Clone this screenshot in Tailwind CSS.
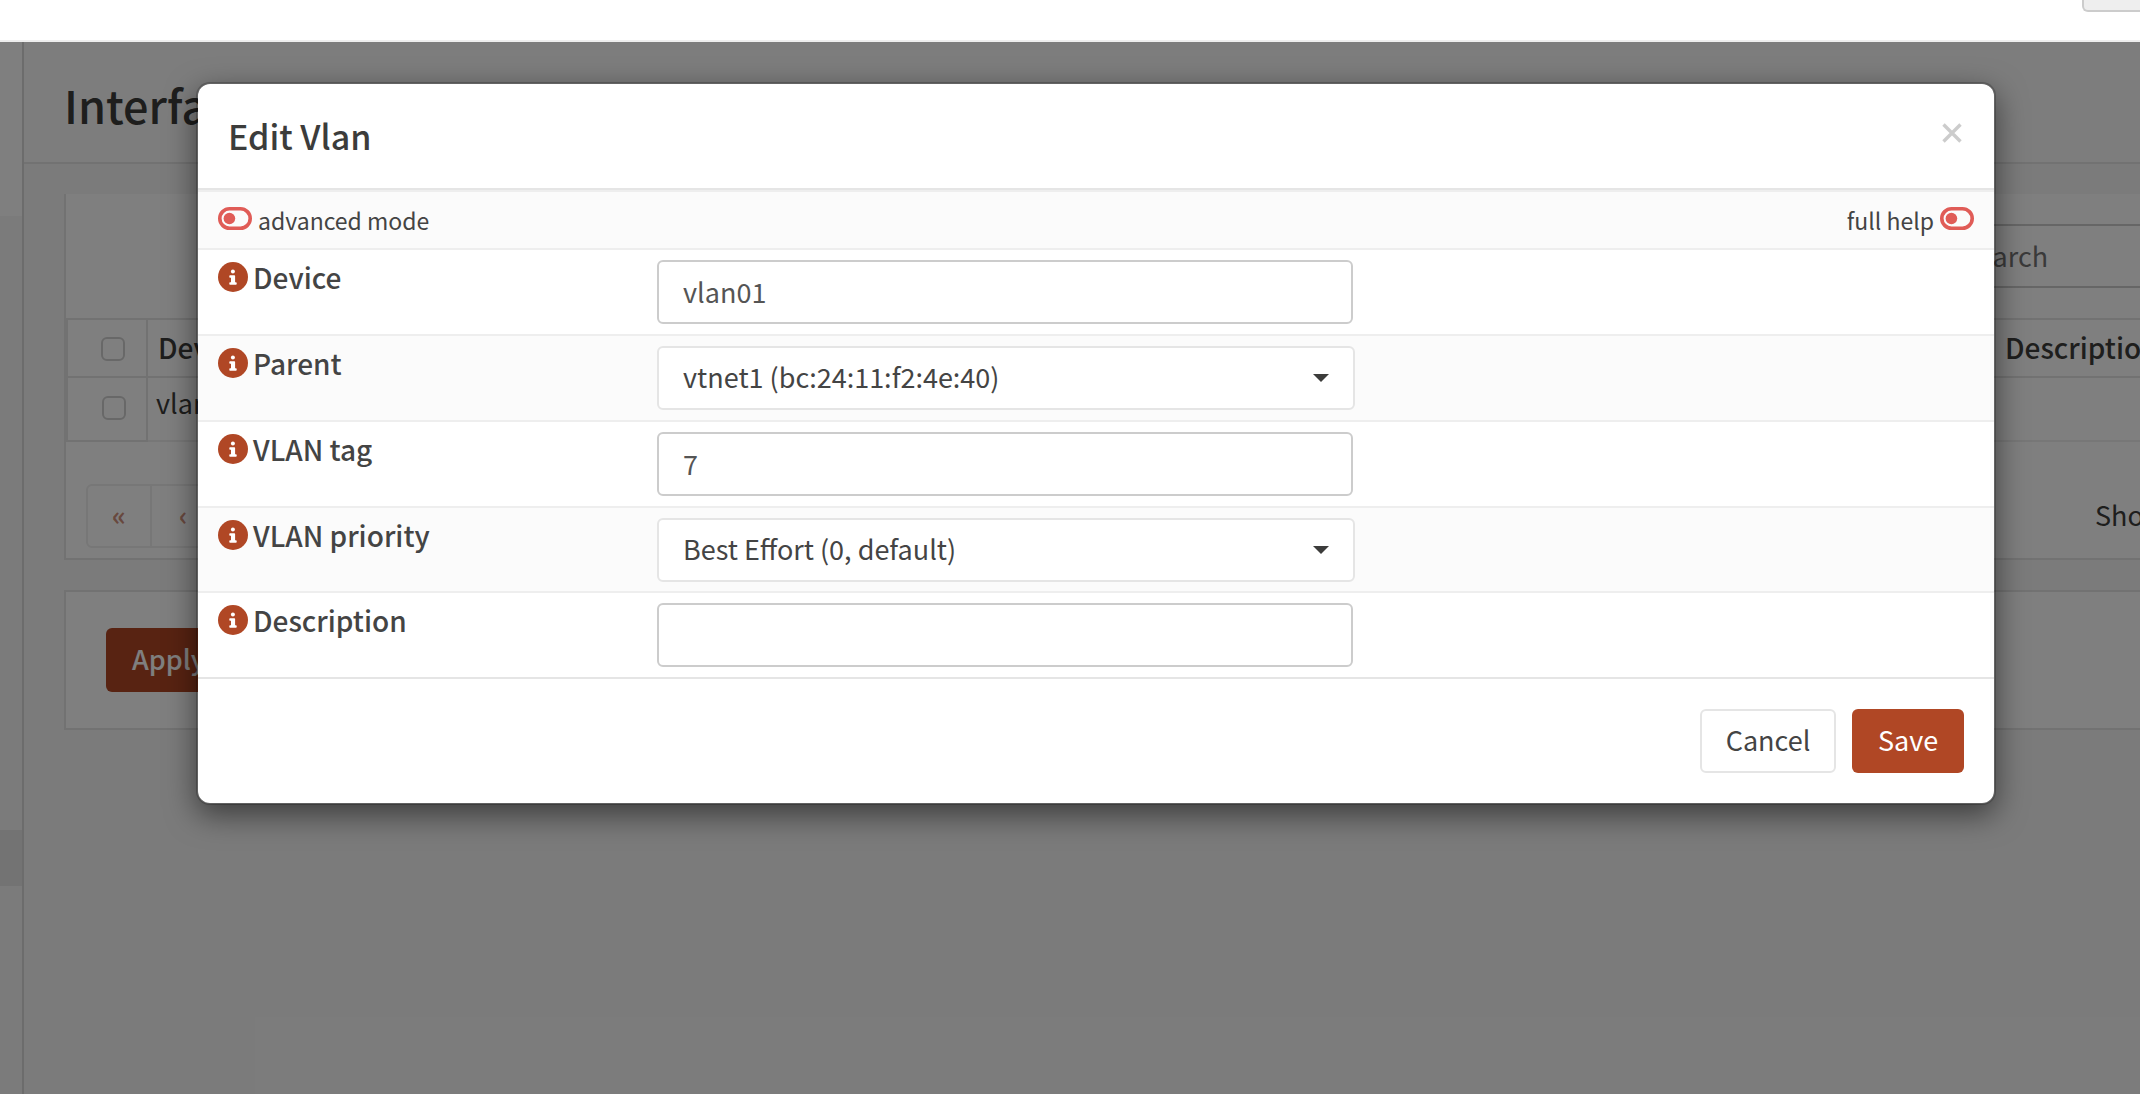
<!DOCTYPE html>
<html lang="en">
<head>
<meta charset="utf-8">
<meta name="viewport" content="width=device-width, initial-scale=1">
<title>Interfaces: Edit Vlan</title>
<script src="https://cdn.jsdelivr.net/npm/@tailwindcss/browser@4"></script>
</head>
<body class="flex min-h-screen flex-col overflow-hidden bg-white font-['Noto_Sans_CJK_SC','Noto_Sans',sans-serif] text-[27px] leading-[36px] text-[#3c3c3b]">
<svg class="hidden" aria-hidden="true">
  <symbol id="info" viewBox="0 0 30 30">
    <circle cx="15" cy="15" r="15" fill="#b04725"/>
    <circle cx="14.9" cy="9.4" r="2" fill="#fff"/>
    <path d="M12.1 13.2h4.2a.8.8 0 0 1 .8.8v6.2h.8a.8.8 0 0 1 .8.8v1a.8.8 0 0 1-.8.8h-5.800a.8.8 0 0 1-.8-.8v-1a.8.8 0 0 1 .8-.8h.9v-4.400h-.9a.8.8 0 0 1-.8-.8v-1a.8.8 0 0 1 .8-.8z" fill="#fff"/>
  </symbol>
  <symbol id="toggle" viewBox="0 0 34 23">
    <rect x="1.800" y="1.800" width="30.400" height="19.400" rx="9.700" fill="none" stroke="#e05c57" stroke-width="3.600"/>
    <circle cx="11.400" cy="11.500" r="5.800" fill="#e05c57"/>
  </symbol>
</svg>

<header class="flex h-[42px] shrink-0 items-start justify-end border-b-2 border-[#eee] bg-white">
  <input type="search" aria-label="Find page" class="h-3 w-[58px] rounded-bl-md border-b-2 border-l-2 border-[#ccc] bg-[#eee]">
</header>

<div class="relative flex grow overflow-hidden">
  <nav aria-label="Sidebar" class="flex w-6 shrink-0 flex-col border-r-2 border-[#d9d9d9] bg-[#f7f7f7]">
    <div class="h-[174px] bg-white"></div>
    <div class="mt-[614px] h-14 bg-[#e6e6e6]"></div>
  </nav>

  <main class="min-w-0 grow bg-[#f7f7f7]">
    <div class="flex h-[122px] items-center border-b-2 border-[#e5e5e5] bg-[#fbfbfb] px-10">
      <h1 class="pt-[6px] text-[45px] leading-[56px] font-medium">Interfaces</h1>
    </div>

    <section class="ml-10 mt-[30px] border-2 border-r-0 border-t-0 border-[#e5e5e5] bg-white">
      <div class="flex justify-end pt-[30px] pb-[30px]">
        <input type="search" placeholder="Search" aria-label="Search" class="h-16 w-[198px] border-y-2 border-[#ccc] bg-white pb-[2px] pl-5 placeholder:text-[#757575]">
      </div>
      <table class="w-full table-fixed border-collapse text-left">
        <thead>
          <tr class="h-[58px] border-y-2 border-[#e5e5e5]">
            <th class="w-20 border-x-2 border-[#e5e5e5] pt-[2px] pl-[33px]"><input type="checkbox" aria-label="Select all" class="block size-6 appearance-none rounded-md border-2 border-[#d0d0d0] bg-white"></th>
            <th class="w-[1858px] pb-[2px] pl-[10px] text-[28px] font-medium">Device</th>
            <th class="pb-[2px] text-[28px] font-medium whitespace-nowrap">Description</th>
          </tr>
        </thead>
        <tbody>
          <tr class="h-16 border-b-2 border-[#eee] align-top">
            <td class="border-x-2 border-b-2 border-[#e5e5e5] pt-[18px] pl-[34px]"><input type="checkbox" aria-label="Select vlan01" class="block size-6 appearance-none rounded-md border-2 border-[#d0d0d0] bg-white"></td>
            <td class="pt-[7px] pl-2">vlan01</td>
            <td></td>
          </tr>
        </tbody>
      </table>
      <div class="flex items-center justify-between overflow-hidden px-5 pt-[42px] pb-[10px]">
        <div class="flex h-16 rounded-md border-2 border-[#eee] text-[#b04725]/60">
          <button class="w-16 border-r-2 border-[#eee] pb-[2px] font-bold">«</button>
          <button class="w-16 border-r-2 border-[#eee] pb-[2px] font-bold">‹</button>
        </div>
        <span class="-mr-[105px] w-[130px] pb-[2px] whitespace-nowrap">Showing 1</span>
      </div>
    </section>

    <section class="ml-10 mt-[30px] border-2 border-r-0 border-[#e5e5e5] bg-white px-10 py-9">
      <button class="block h-16 rounded-md bg-[#b04725] px-[26px] pb-[2px] font-medium text-white">Apply</button>
    </section>
  </main>

  <div class="absolute inset-0 bg-black/50"></div>

  <div role="dialog" aria-labelledby="dialog-title" class="absolute inset-x-0 top-0 mt-10 mr-36 ml-49 rounded-[14px] border-2 border-black/20 bg-white bg-clip-padding shadow-[0_10px_30px_rgba(0,0,0,0.5)]">
    <div class="flex h-[106px] items-start justify-between border-b-2 border-[#e5e5e5] px-[30px]">
      <h2 id="dialog-title" class="pt-8 text-[34px] leading-[40px] font-medium">Edit Vlan</h2>
      <button aria-label="Close" class="mt-[33px] -mr-1 p-1 text-[#ccc]">
        <svg class="size-6" viewBox="0 0 24 24" fill="none" stroke="currentColor" stroke-width="3.400"><path d="M3.500 3.500 20.500 20.500M20.500 3.500 3.500 20.500"/></svg>
      </button>
    </div>
    <form class="text-[#444]">
      <div class="flex h-[58px] items-center justify-between border-t-2 border-[#eee] bg-[#fbfbfb] px-5 text-[23px] leading-8">
        <a href="#advanced" class="flex items-start gap-[6px]"><svg class="mt-[3px] h-[23px] w-[34px]"><use href="#toggle"/></svg>advanced mode</a>
        <a href="#help" class="flex items-start gap-[6px]">full help<svg class="mt-[3px] h-[23px] w-[34px]"><use href="#toggle"/></svg></a>
      </div>
      <div class="grid h-[86px] grid-cols-[25%_40%_35%] border-t-2 border-[#eee] pt-[10px]">
        <label for="device" class="flex items-start gap-[5px] pl-5 text-[28px] leading-[34px] font-medium"><svg class="mt-[2px] size-[30px]"><use href="#info"/></svg>Device</label>
        <div class="px-[10px]"><input id="device" type="text" value="vlan01" class="h-16 w-full max-w-[696px] rounded-md border-2 border-[#ccc] bg-white px-6 pb-[2px] text-[#555]"></div>
      </div>
      <div class="grid h-[86px] grid-cols-[25%_40%_35%] border-t-2 border-[#eee] bg-[#fbfbfb] pt-[10px]">
        <label for="parent" class="flex items-start gap-[5px] pl-5 text-[28px] leading-[34px] font-medium"><svg class="mt-[2px] size-[30px]"><use href="#info"/></svg>Parent</label>
        <div class="relative px-[10px]">
          <select id="parent" class="h-16 w-full appearance-none rounded-md border-2 border-[#e5e5e5] bg-white px-6 pb-[2px]"><option>vtnet1 (bc:24:11:f2:4e:40)</option></select>
          <svg class="pointer-events-none absolute top-7 right-9 h-2 w-4" viewBox="0 0 16 8"><path d="M0 0h16l-8 8z" fill="#3c3c3b"/></svg>
        </div>
      </div>
      <div class="grid h-[86px] grid-cols-[25%_40%_35%] border-t-2 border-[#eee] pt-[10px]">
        <label for="tag" class="flex items-start gap-[5px] pl-5 text-[28px] leading-[34px] font-medium"><svg class="mt-[2px] size-[30px]"><use href="#info"/></svg>VLAN tag</label>
        <div class="px-[10px]"><input id="tag" type="text" value="7" class="h-16 w-full max-w-[696px] rounded-md border-2 border-[#ccc] bg-white px-6 pb-[2px] text-[#555]"></div>
      </div>
      <div class="grid h-[85px] grid-cols-[25%_40%_35%] border-t-2 border-[#eee] bg-[#fbfbfb] pt-[10px]">
        <label for="priority" class="flex items-start gap-[5px] pl-5 text-[28px] leading-[34px] font-medium"><svg class="mt-[2px] size-[30px]"><use href="#info"/></svg>VLAN priority</label>
        <div class="relative px-[10px]">
          <select id="priority" class="h-16 w-full appearance-none rounded-md border-2 border-[#e5e5e5] bg-white px-6 pb-[2px]"><option>Best Effort (0, default)</option></select>
          <svg class="pointer-events-none absolute top-7 right-9 h-2 w-4" viewBox="0 0 16 8"><path d="M0 0h16l-8 8z" fill="#3c3c3b"/></svg>
        </div>
      </div>
      <div class="grid h-[86px] grid-cols-[25%_40%_35%] border-t-2 border-[#eee] pt-[10px]">
        <label for="description" class="flex items-start gap-[5px] pl-5 text-[28px] leading-[34px] font-medium"><svg class="mt-[2px] size-[30px]"><use href="#info"/></svg>Description</label>
        <div class="px-[10px]"><input id="description" type="text" class="h-16 w-full max-w-[696px] rounded-md border-2 border-[#ccc] bg-white px-6 pb-[2px] text-[#555]"></div>
      </div>
      <div class="flex justify-end gap-4 border-t-2 border-[#e5e5e5] p-[30px]">
        <button type="button" class="h-16 w-[136px] rounded-md border-2 border-[#e5e5e5] bg-white pb-[2px]">Cancel</button>
        <button type="submit" class="h-16 w-28 rounded-md bg-[#b04725] pb-[2px] text-white">Save</button>
      </div>
    </form>
  </div>
</div>
</body>
</html>
